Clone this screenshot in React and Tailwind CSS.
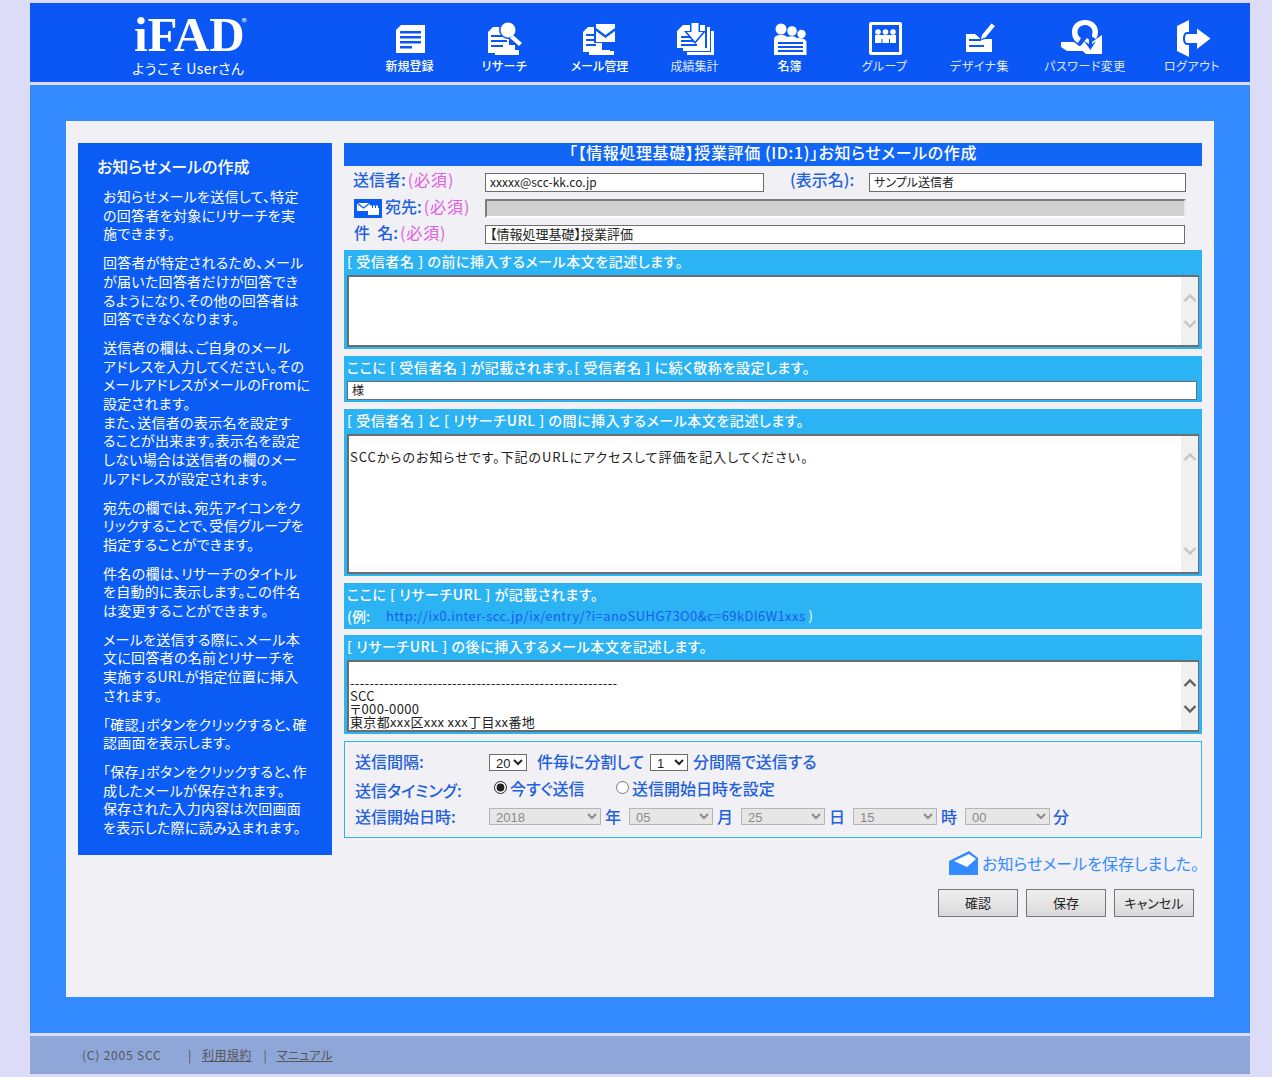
const Doc = () => (
  <>
    <path d="M13 5H37V33H8V10Z" fill="white" />
    <path d="M12 11H33V13.5H12ZM12 16H33V18.5H12ZM12 21H33V23.5H12ZM12 26H24V28.5H12Z" fill="#0a57f5" />
  </>
);

const Research = () => (
  <>
    <path d="M12 8H26V30H36V35H12Z" fill="white" />
    <path d="M10 7H20V25H32V33H5V12Z" fill="white" />
    <path d="M8 15H22V17H8ZM8 20H24V22H8ZM8 25H20V27H8Z" fill="#0a57f5" />
    <circle cx="25" cy="10" r="9" fill="#0a57f5" />
    <circle cx="25" cy="10" r="7.5" fill="white" />
    <path d="M30 15L39 23L36 26L27 18Z" fill="white" />
  </>
);

const MailAdmin = () => (
  <>
    <path d="M11 9H24V31H36V35H11Z" fill="white" />
    <path d="M10 7H20V30H32V32H5V12Z" fill="white" />
    <path d="M8 14H18V16H8ZM8 19H18V21H8ZM8 24H18V26H8Z" fill="#0a57f5" />
    <path d="M16 3H38V23H16Z" fill="#0a57f5" />
    <path d="M18 4H37V22H18Z" fill="white" />
    <path d="M18 8L27.5 15L37 8V11L27.5 18L18 11Z" fill="#0a57f5" />
  </>
);

const Totals = () => (
  <>
    <path d="M38 11H41V35H14V32H38Z" fill="white" />
    <path d="M34 7H37V31H10V28H34Z" fill="white" />
    <path d="M10 5H18V12H23V5H32V28H4V11Z" fill="white" />
    <path d="M8 16H17V18H8ZM8 20H20V22H8ZM8 24H24V26H8Z" fill="#0a57f5" />
    <path d="M17 3H27V11H33L22 24L11 11H17Z" fill="#0a57f5" />
    <path d="M18.5 3H25.5V12H30L22 21.5L14 12H18.5Z" fill="white" />
  </>
);

const Roster = () => (
  <>
    <circle cx="13" cy="9" r="5.5" fill="white" />
    <circle cx="24" cy="11" r="4.8" fill="white" />
    <circle cx="33.5" cy="14" r="4.2" fill="white" />
    <path d="M6 20C6 16 9 15 13 15C16 15 18 15.5 19 17C22 16 27 16 29 18C31 18 38 18 38.5 22V35H6Z" fill="white" />
    <path d="M10 22H35V24H10ZM10 26H35V28H10ZM10 30H35V32H10Z" fill="#0a57f5" />
  </>
);

const Group = () => (
  <>
    <rect x="6" y="2" width="33" height="33" rx="2" fill="white" />
    <rect x="9" y="5" width="27" height="27" fill="#0a57f5" />
    <circle cx="15" cy="12" r="2.8" fill="white" />
    <circle cx="22.5" cy="12" r="2.8" fill="white" />
    <circle cx="30" cy="12" r="2.8" fill="white" />
    <path d="M12 15H33V23H12Z" fill="white" />
    <path d="M18.5 19H19.5V23H18.500ZM26 19H27V23H26Z" fill="#0a57f5" />
  </>
);

const Design = () => (
  <>
    <path d="M8 14H17L24 20L27 19L34 19V32H8Z" fill="white" />
    <path d="M11 19H23V21H11ZM11 25H26V27H11Z" fill="#0a57f5" />
    <path d="M22 15L33 2.500L38 6L28 18L22 20Z" fill="#0a57f5" />
    <path d="M24 15L33.500 3.500L37 6L27.500 17.500L23 19Z" fill="white" />
  </>
);

const Password = () => (
  <>
    <path d="M22 0C30 0 35 5 35 12C35 15 34 17 33 19L28 16C29 15 29.500 13.500 29.500 12C29.500 8 26 5 22 5C18 5 14.500 8 14.500 12C14.500 15 16 17 18 18L15 23C11 21 9 17 9 12C9 5 14 0 22 0Z" fill="white" />
    <path d="M-2 22H11L16 26L22 25V31H4L-2 27Z" fill="white" />
    <path d="M24 18L29 22L39 15V34H23L16 28Z" fill="white" />
    <path d="M26 14H29V24L33 21L27.500 30L21 21L26 24Z" fill="#0a57f5" />
  </>
);

const Logout = () => (
  <>
    <path d="M7 6L19 0V37L7 31Z" fill="white" />
    <path d="M17 12H25V5L42 18.500L25 32V25H17C14.500 25 13 22 13 18.500C13 15 14.500 12 17 12Z" fill="#0a57f5" />
    <path d="M17 14H27V8.500L40.500 18.500L27 29V23H17C15.500 23 15 20.500 15 18.500C15 16.500 15.500 14 17 14Z" fill="white" />
  </>
);

const navItems = [
  { label: '新規登録', Icon: Doc, width: 'w-[95px]', color: 'font-medium text-white' },
  { label: 'リサーチ', Icon: Research, width: 'w-[95px]', color: 'font-medium tracking-[0.5px] text-white' },
  { label: 'メール管理', Icon: MailAdmin, width: 'w-[95px]', color: 'font-medium text-white' },
  { label: '成績集計', Icon: Totals, width: 'w-[95px]', color: 'text-[#dfe7ff]' },
  { label: '名簿', Icon: Roster, width: 'w-[95px]', color: 'font-medium text-white' },
  { label: 'グループ', Icon: Group, width: 'w-[95px]', color: 'tracking-[0.5px] text-[#dfe7ff]' },
  { label: 'デザイナ集', Icon: Design, width: 'w-[95px]', color: 'tracking-[0.5px] text-[#dfe7ff]' },
  { label: 'パスワード変更', Icon: Password, width: 'w-[116px]', color: 'tracking-[0.5px] text-[#dfe7ff]' },
  { label: 'ログアウト', Icon: Logout, width: 'w-[98px]', color: 'tracking-[0.5px] text-[#dfe7ff]' },
];

const help = [
  ['お知らせメールを送信して、特定', 'の回答者を対象にリサーチを実', '施できます。'],
  ['回答者が特定されるため、メール', 'が届いた回答者だけが回答でき', 'るようになり、その他の回答者は', '回答できなくなります。'],
  ['送信者の欄は、ご自身のメール', 'アドレスを入力してください。その', 'メールアドレスがメールのFromに', '設定されます。', 'また、送信者の表示名を設定す', 'ることが出来ます。表示名を設定', 'しない場合は送信者の欄のメー', 'ルアドレスが設定されます。'],
  ['宛先の欄では、宛先アイコンをク', 'リックすることで、受信グループを', '指定することができます。'],
  ['件名の欄は、リサーチのタイトル', 'を自動的に表示します。この件名', 'は変更することができます。'],
  ['メールを送信する際に、メール本', '文に回答者の名前とリサーチを', '実施するURLが指定位置に挿入', 'されます。'],
  ['「確認」ボタンをクリックすると、確', '認画面を表示します。'],
  ['「保存」ボタンをクリックすると、作', '成したメールが保存されます。', '保存された入力内容は次回画面', 'を表示した際に読み込まれます。'],
];

const Section = ({ children, className }) => (
  <div className={`bg-[#2bb3f3] px-[3px] ${className}`}>{children}</div>
);

const SectionLabel = ({ children }) => (
  <div className="pb-[2px] text-[14px] font-medium leading-[23px] tracking-[0.55px] text-white">{children}</div>
);

const Chevron = ({ up, dark }) => (
  <svg width="14" height="10" viewBox="0 0 14 10" fill="none" stroke={dark ? '#606060' : '#c4c4c4'} strokeWidth="2.4">
    <path d={up ? 'M1.500 8L7 2.500L12.500 8' : 'M1.500 2L7 7.500L12.500 2'} />
  </svg>
);

const Area = ({ height, dark, value, tracking = '' }) => (
  <div className={`flex ${height} border-2 border-[#6d6d6d] border-r-[1px] bg-white`}>
    <textarea
      readOnly
      value={value}
      className={`flex-1 resize-none overflow-hidden pl-[1px] pt-[1px] text-[13px] leading-[13px] text-[#222] outline-none ${tracking}`}
    />
    <div className="flex w-[17px] flex-col items-center justify-between bg-[#f0f0f0] py-[16px]">
      <Chevron up dark={dark} />
      <Chevron dark={dark} />
    </div>
  </div>
);

const Label = ({ children, className = '' }) => (
  <span className={`text-[16px] font-medium text-[#1f60dc] ${className}`}>{children}</span>
);

const Req = () => (
  <span className="ml-[2px] text-[16px] tracking-[0.9px] text-[#e060e0]">(必須)</span>
);

const Box = ({ className = '', value }) => (
  <input
    readOnly
    value={value}
    className={`h-[19px] border border-[#6d6d6d] bg-white px-[4px] pb-[2px] text-[12px] text-[#222] outline-none ${className}`}
  />
);

const Pick = ({ value, className = '', disabled }) => (
  <select
    disabled={disabled}
    defaultValue={value}
    className={`h-[17px] border py-0 pl-[2px] [font-family:'Liberation_Sans',sans-serif] text-[13px] leading-none ${disabled ? 'border-[#b5b5b5] bg-[#e6e6e6] text-[#8a8a8a]' : 'border-[#6d6d6d] bg-white text-[#222]'} ${className}`}
  >
    <option>{value}</option>
  </select>
);

const Btn = ({ children }) => (
  <button className="h-[28px] w-[80px] border border-[#767676] bg-gradient-to-b from-[#efefef] to-[#dadada] text-[13px] text-[#222]">
    {children}
  </button>
);

export default function App() {
  return (
    <div className="min-h-[1077px] bg-[#dcdcf8] pt-[3px] [font-family:'Noto_Sans_CJK_JP',sans-serif] [font-feature-settings:'palt']">
      <div className="mx-[30px] w-[1220px]">
        <header className="flex h-[79px] bg-[#0a57f5]">
          <div className="w-[332px] shrink-0">
            <div className="ml-[104px] flex h-[50px] items-start pt-[14px] text-white">
              <span className="[font-family:'Liberation_Serif',serif] text-[49px] font-bold leading-[36px]">iFAD</span>
              <span className="-ml-[3px] text-[10px] leading-[10px]">®</span>
            </div>
            <div className="ml-[102px] mt-[7px] text-[14px] leading-[16px] tracking-[0.5px] text-white">ようこそ Userさん</div>
          </div>
          <nav className="flex">
            {navItems.map(({ label, Icon, width, color }) => (
              <div key={label} className={`flex flex-col items-center pt-[17px] ${width}`}>
                <svg width="44" height="37" viewBox="0 0 44 37" className="overflow-visible">
                  <Icon />
                </svg>
                <span className={`mt-[1px] text-[12px] leading-[16px] ${color}`}>{label}</span>
              </div>
            ))}
          </nav>
        </header>

        <main className="mt-[3px] h-[948px] bg-[#338bff] px-[36px] pt-[36px]">
          <div className="flex h-[876px] gap-[12px] bg-[#f0f0f5] px-[12px] pt-[22px]">
            <aside className="h-[712px] w-[254px] shrink-0 bg-[#0a5cf5] pl-[25px] pt-[11px] text-white">
              <h2 className="-ml-[6px] text-[16px] font-medium leading-[24px]">お知らせメールの作成</h2>
              <div className="mt-[9px] flex flex-col gap-[10px] text-[14px] leading-[18.7px] tracking-[0.3px]">
                {help.map((lines) => (
                  <p key={lines[0]}>
                    {lines.map((line) => (
                      <span key={line} className="block whitespace-nowrap">{line}</span>
                    ))}
                  </p>
                ))}
              </div>
            </aside>

            <div className="w-[858px] shrink-0">
              <h1 className="h-[23px] bg-[#1166f5] text-center text-[16px] font-medium leading-[19px] tracking-[0.6px] text-white">
                「【情報処理基礎】授業評価 (ID:1)」お知らせメールの作成
              </h1>

              <div className="mt-[3px] flex h-[27px] items-center">
                <div className="-mt-[7px] w-[141px] pl-[9px]"><Label>送信者:</Label><Req /></div>
                <Box className="w-[279px]" value="xxxxx@scc-kk.co.jp" />
                <Label className="-mt-[7px] ml-[26px] w-[79px]">(表示名):</Label>
                <Box className="w-[317px]" value="サンプル送信者" />
              </div>
              <div className="flex h-[24px] items-center">
                <div className="flex w-[141px] items-center pl-[10px]">
                  <div className="mr-[3px] flex h-[19px] w-[28px] items-center justify-center bg-[#0a5cf5]">
                    <svg width="22" height="13" viewBox="0 0 22 13">
                      <path d="M0 1H13V9H0Z" fill="white" />
                      <path d="M0 1L6.500 6L13 1" fill="none" stroke="#0a5cf5" strokeWidth="1.200" />
                      <path d="M11 6H22V13H11Z" fill="white" />
                      <path d="M13 3.500H15V7H13ZM16 3.500H18V7H16ZM19 3.500H21V7H19Z" fill="white" />
                    </svg>
                  </div>
                  <span className="-mt-[4px]"><Label>宛先:</Label><Req /></span>
                </div>
                <div className="h-[19px] w-[701px] border-2 border-[#7d7d7d] border-b-white border-r-[#e8e8e8] bg-[#d0d0d0]" />
              </div>
              <div className="flex h-[29px] items-center">
                <div className="-mt-[6px] w-[141px] pl-[10px]"><Label>件&nbsp;&nbsp;名:</Label><Req /></div>
                <Box className="w-[700px] text-[13px]" value="【情報処理基礎】授業評価" />
              </div>

              <Section className="mt-[1px] h-[99px]">
                <SectionLabel>[ 受信者名 ] の前に挿入するメール本文を記述します。</SectionLabel>
                <Area height="h-[72px]" value="" />
              </Section>

              <Section className="mt-[7px] h-[46px]">
                <SectionLabel>ここに [ 受信者名 ] が記載されます。[ 受信者名 ] に続く敬称を設定します。</SectionLabel>
                <Box className="block h-[18px] w-[850px] px-[2px]" value="様" />
              </Section>

              <Section className="mt-[7px] h-[167px]">
                <SectionLabel>[ 受信者名 ] と [ リサーチURL ] の間に挿入するメール本文を記述します。</SectionLabel>
                <Area
                  height="h-[140px]"
                  tracking="tracking-[0.95px]"
                  value={'\nSCCからのお知らせです。下記のURLにアクセスして評価を記入してください。'}
                />
              </Section>

              <Section className="mt-[7px] h-[46px]">
                <SectionLabel>ここに [ リサーチURL ] が記載されます。</SectionLabel>
                <div className="-mt-[2px] flex text-[13px] leading-[20px] text-white">
                  <span className="w-[39px] text-[14px] font-medium">(例:</span>
                  <span className="tracking-[0.42px] text-[#1a5cf0]">http://ix0.inter-scc.jp/ix/entry/?i=anoSUHG73O0&amp;c=69kDl6W1xxs</span>
                  <span className="ml-[3px]">)</span>
                </div>
              </Section>

              <Section className="mt-[6px] h-[99px]">
                <SectionLabel>[ リサーチURL ] の後に挿入するメール本文を記述します。</SectionLabel>
                <Area
                  height="h-[72px]"
                  dark
                  tracking="tracking-[0.35px]"
                  value={'\n-------------------------------------------------------\nSCC\n〒000-0000\n東京都xxx区xxx xxx丁目xx番地'}
                />
              </Section>

              <div className="mt-[7px] flex h-[97px] flex-col border border-[#2bb3f3] pl-[10px] pt-[9px]">
                <div className="flex h-[23px] items-center">
                  <Label className="-mt-[3px] w-[134px]">送信間隔:</Label>
                  <Pick value="20" className="w-[38px]" />
                  <Label className="-mt-[3px] ml-[10px] w-[113px]">件毎に分割して</Label>
                  <Pick value="1" className="w-[38px]" />
                  <Label className="-mt-[3px] ml-[5px]">分間隔で送信する</Label>
                </div>
                <div className="flex h-[27px] items-center">
                  <Label className="mt-[5px] w-[139px]">送信タイミング:</Label>
                  <input type="radio" defaultChecked name="timing" className="m-0 mr-[3px] h-[13px] w-[13px] accent-[#222]" />
                  <Label className="w-[106px]">今すぐ送信</Label>
                  <input type="radio" name="timing" className="m-0 mr-[3px] h-[13px] w-[13px] accent-[#222]" />
                  <Label>送信開始日時を設定</Label>
                </div>
                <div className="mt-[3px] flex h-[24px] items-center">
                  <Label className="w-[134px]">送信開始日時:</Label>
                  <Pick disabled value="2018" className="w-[112px]" />
                  <Label className="ml-[4px] w-[24px]">年</Label>
                  <Pick disabled value="05" className="w-[84px]" />
                  <Label className="ml-[4px] w-[24px]">月</Label>
                  <Pick disabled value="25" className="w-[84px]" />
                  <Label className="ml-[4px] w-[24px]">日</Label>
                  <Pick disabled value="15" className="w-[84px]" />
                  <Label className="ml-[4px] w-[24px]">時</Label>
                  <Pick disabled value="00" className="w-[85px]" />
                  <Label className="ml-[3px]">分</Label>
                </div>
              </div>

              <div className="mt-[13px] flex h-[24px] items-center justify-end pr-[3px]">
                <svg width="29" height="24" viewBox="0 0 29 24" className="mr-[4px]">
                  <path d="M0 10L20 0L29 7V24H0Z" fill="#338bff" />
                  <path d="M5 10L20 3L27 8L18 16Z" fill="white" />
                </svg>
                <span className="text-[16px] text-[#338bff]">お知らせメールを保存しました。</span>
              </div>

              <div className="mt-[14px] flex justify-end gap-[8px] pr-[8px]">
                <Btn>確認</Btn>
                <Btn>保存</Btn>
                <Btn>キャンセル</Btn>
              </div>
            </div>
          </div>
        </main>

        <footer className="mt-[3px] flex h-[38px] items-center bg-[#8fa6d8] pl-[52px] text-[12px] text-[#555]">
          <span className="w-[106px] tracking-[0.8px]">(C) 2005 SCC</span>
          <span className="w-[14px]">|</span>
          <a className="underline tracking-[0.4px]">利用規約</a>
          <span className="ml-[12px] w-[13px]">|</span>
          <a className="underline tracking-[0.4px]">マニュアル</a>
        </footer>
      </div>
    </div>
  );
}
